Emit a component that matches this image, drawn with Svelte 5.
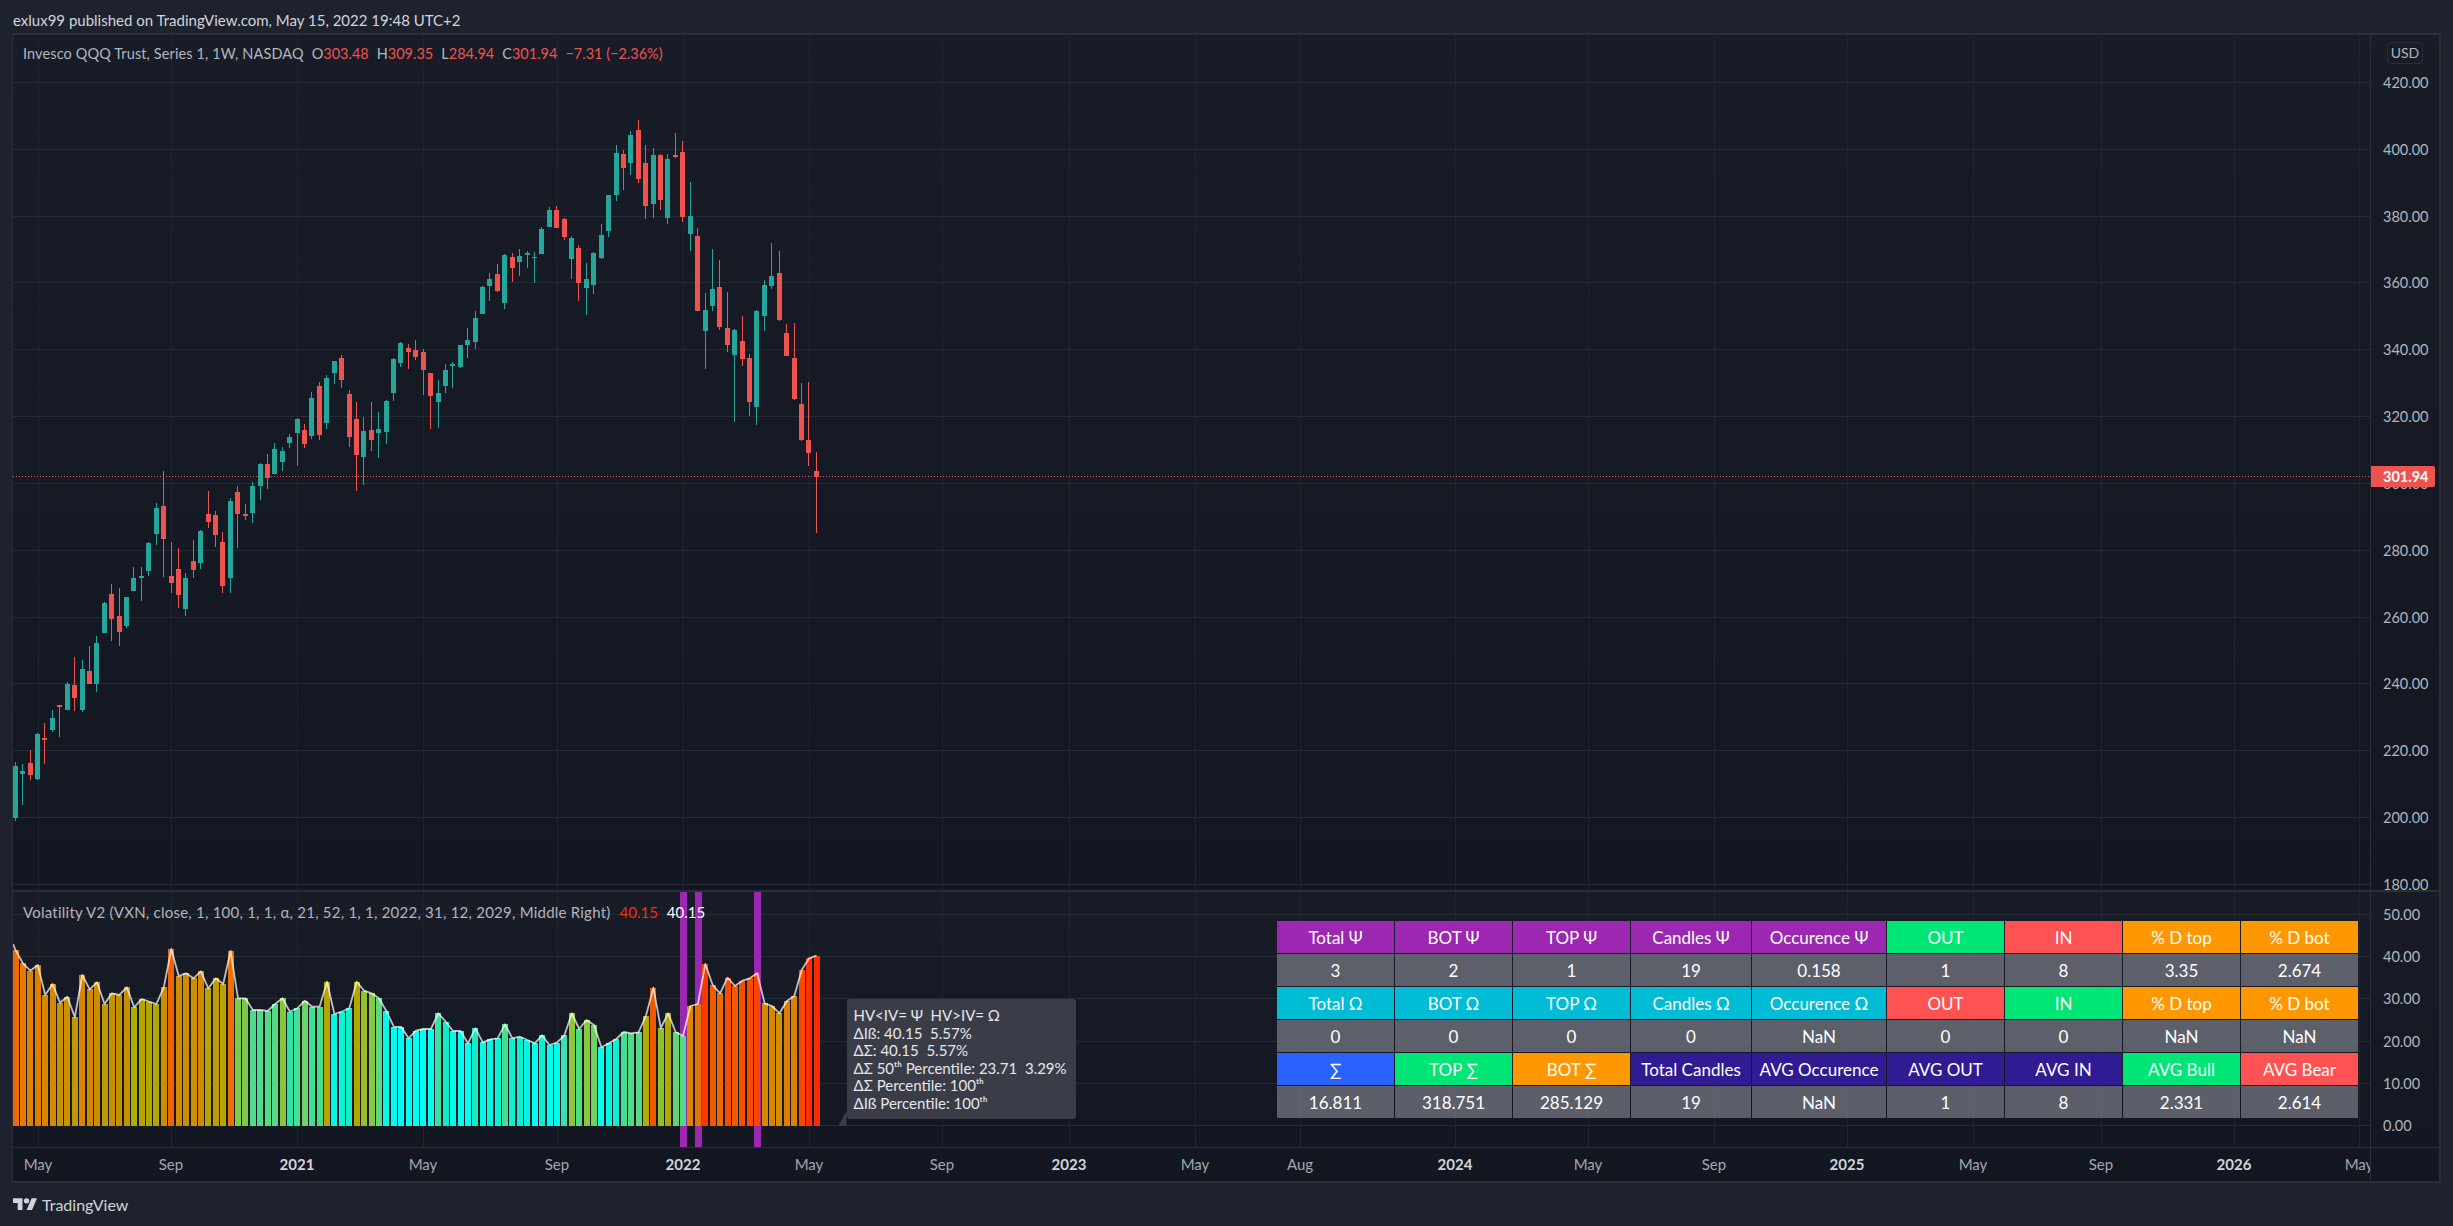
<script>
  const G = 'g', R = 'r';
  // [colour, high, bodyTop, bodyBottom, low] read from reference crops, scaled 3x with a y origin
  const z7 = [[G,966,978,1134,1143],[G,972,993,1002,1095],[R,930,969,1005,1020],[G,879,882,1017,1020],[R,849,894,900,972],[G,810,834,870,876],[R,795,795,801,891],[G,726,732,810,810],[R,651,735,774,813],[G,660,687,810,816],[R,618,693,732,732],[G,588,609,732,756],[G,486,489,579,579],[R,432,462,537,603],[R,444,528,576,618],[G,471,471,558,564],[G,381,414,453,453],[G,381,408,414,483],[G,306,309,393,408],[G,189,204,282,315],[R,93,198,297,411],[R,306,408,429,459],[R,324,387,465,504],[G,399,414,507,528],[R,300,363,390,414],[G,270,273,369,387],[R,153,222,246,264],[R,213,225,285,321],[R,276,306,438,459],[G,174,183,414,459],[R,138,156,222,324],[R,192,222,228,240],[G,126,138,219,249],[G,69,72,138,180],[R,42,72,114,147],[G,9,27,102,102]];
  const z8 = [[G,651,663,696,723],[G,612,621,639,654],[G,564,567,609,708],[R,582,600,642,654],[G,486,504,618,627],[R,456,468,615,630],[G,435,444,579,597],[G,393,393,429,462],[R,375,384,450,474],[R,480,492,621,651],[R,516,567,675,783],[G,561,603,681,765],[R,516,600,630,663],[G,546,597,609,684],[G,510,513,606,642],[G,384,387,489,513],[G,336,339,399,411],[R,342,354,366,417],[R,330,360,381,390],[R,357,366,420,495],[R,429,429,498,597],[G,450,489,516,594],[G,402,420,468,489],[G,396,402,408,474],[G,345,345,411,414],[G,294,330,345,384],[G,243,264,336,357],[G,168,171,252,252],[G,129,147,168,213],[R,102,132,183,186],[G,72,75,219,237],[R,69,81,114,156],[G,57,78,96,138],[G,63,69,75,114]];
  const z9 = [[G,426,441,444,519],[G,351,357,432,432],[G,291,300,351,351],[R,288,300,354,354],[R,324,327,381,390],[G,378,384,447,507],[R,405,414,519,573],[G,459,507,534,615],[G,426,429,525,552],[G,342,375,444,447],[G,255,255,363,381],[G,105,129,255,273],[R,120,132,174,240],[G,63,75,159,195],[R,30,60,207,219],[R,105,159,288,327],[G,114,135,282,324],[R,132,135,270,300],[G,132,147,324,342],[R,69,135,141,144],[R,93,126,321,336],[G,216,318,372,423],[R,354,378,603,603],[G,549,600,663,777],[G,417,537,588,603],[R,450,531,651,660],[R,546,654,705,726],[G,657,660,735,936],[R,618,693,747,768],[R,732,744,876,918],[G,600,603,891,945],[G,510,525,618,663],[G,399,498,528,537],[R,423,489,630,633],[R,642,669,738,738],[R,639,744,867,870],[R,819,882,990,993],[R,816,990,1029,1068],[R,1026,1083,1101,1269]];

  const conv = (list, y0) => list.map(([c, h, t, b, l]) => ({
    c, h: y0 + h / 3, t: y0 + t / 3, b: y0 + b / 3, l: y0 + l / 3
  }));
  const px = (i) => Math.floor(15.3 + 7.417 * i);
  const candles = [...conv(z7, 440), ...conv(z8, 230), ...conv(z9, 110)].map((k, i) => ({ ...k, x: px(i) }));

  const vol = [[60,'#ef6a02'],[100,'#e67a02'],[122,'#dc8200'],[105,'#e07e00'],[195,'#d88600'],[162,'#d68800'],[218,'#c89200'],[200,'#cc9000'],[262,'#c49600'],[135,'#dc8400'],[178,'#d28a00'],[157,'#d08c00'],[222,'#bc9a00'],[190,'#c89000'],[195,'#c49200'],[172,'#c69000'],[232,'#aab000'],[207,'#b8a400'],[215,'#b0a800'],[222,'#b0a800'],[172,'#c89000'],[57,'#f06400'],[138,'#d28a00'],[130,'#d08c00'],[145,'#cc9000'],[124,'#d48800'],[175,'#b8a400'],[145,'#c09c00'],[162,'#b8a400'],[63,'#ee7000'],[205,'#7ecb4a'],[205,'#80c84a'],[240,'#4ddc8c'],[240,'#4edb8a'],[243,'#52da84'],[222,'#58d886'],[205,'#86c83c'],[245,'#2ce6a2'],[235,'#40e09a'],[212,'#6cd26a'],[230,'#44de90'],[230,'#4adc8a'],[155,'#b8a400'],[252,'#00f8e0'],[245,'#0af4d8'],[235,'#14eec6'],[155,'#b0a800'],[182,'#98c024'],[190,'#88c83c'],[205,'#5cd880'],[243,'#00fae8'],[290,'#00fcf0'],[291,'#00fcf0'],[325,'#00fff4'],[302,'#00fff0'],
    [297,'#00fff0'],[297,'#00fff0'],[250,'#3ae0a4'],[275,'#10ecc8'],[303,'#00fbe8'],[303,'#00ffee'],[340,'#00fff0'],[295,'#14ecc4'],[337,'#00fbe8'],[328,'#00f8e0'],[325,'#06f4d8'],[283,'#48dc90'],[325,'#0cf0d0'],[320,'#0cf0d0'],[330,'#04f6e0'],[340,'#00fff0'],[316,'#0cf0d0'],[345,'#00fff0'],[338,'#00fbe8'],[316,'#38e2aa'],[250,'#8cc834'],[297,'#4ede88'],[270,'#88ca3c'],[285,'#70d260'],[352,'#00fdf0'],[340,'#00f8e0'],[327,'#0cf0d0'],[306,'#48dc92'],[310,'#50da88'],[307,'#5ad880'],[258,'#b0ac00'],[173,'#f05800'],[294,'#90c02c'],[250,'#b0a800'],[306,'#64d472'],[318,'#50da88'],[228,'#e48000'],[222,'#e67400'],[102,'#fa3800'],[165,'#f25a00'],[190,'#ee6a00'],[143,'#f54e00'],[168,'#f25a00'],[152,'#f55000'],[145,'#f84c00'],[130,'#fa4400'],[220,'#d68800'],[228,'#d88400'],[250,'#cc9000'],[213,'#e07c00'],[198,'#dc8000'],[120,'#fa4800'],[85,'#ff3000'],[77,'#ff2a00']];
  const base = 1125.7;
  const bars = vol.map(([z, col], i) => {
    const cx = 15.5 + 7.417 * i;
    return { x: Math.round(cx - 3), y: 930 + z / 3, col, cx };
  });
  const linePts = '13,944 ' + bars.map((b) => `${b.cx.toFixed(1)},${b.y.toFixed(1)}`).join(' ');

  const vx = [38, 171, 297, 423, 557, 683, 809, 942, 1069, 1195, 1300, 1455, 1588, 1714, 1847, 1973, 2101, 2234, 2359];
  const vnames = ['May','Sep','2021','May','Sep','2022','May','Sep','2023','May','Aug','2024','May','Sep','2025','May','Sep','2026','May'];
  const mainTicks = [[82,'420.00'],[149,'400.00'],[216,'380.00'],[282,'360.00'],[349,'340.00'],[416,'320.00'],[483,'300.00'],[550,'280.00'],[617,'260.00'],[683,'240.00'],[750,'220.00'],[817,'200.00'],[884,'180.00']];
  const volTicks = [[914,'50.00'],[956,'40.00'],[998,'30.00'],[1041,'20.00'],[1083,'10.00'],[1125,'0.00']];
  const purple = [680, 695, 754];

  const P='purple',S='gray',C='cyan',B='blue',N='green',E='red',O='orange',I='indigo';
  const row = (c, items) => items.map((t) => [t, c]);
  const table = [
    [['Total Ψ',P],['BOT Ψ',P],['TOP Ψ',P],['Candles Ψ',P],['Occurence Ψ',P],['OUT',N],['IN',E],['% D top',O],['% D bot',O]],
    row(S,['3','2','1','19','0.158','1','8','3.35','2.674']),
    [['Total Ω',C],['BOT Ω',C],['TOP Ω',C],['Candles Ω',C],['Occurence Ω',C],['OUT',E],['IN',N],['% D top',O],['% D bot',O]],
    row(S,['0','0','0','0','NaN','0','0','NaN','NaN']),
    [['∑',B],['TOP ∑',N],['BOT ∑',O],['Total Candles',I],['AVG Occurence',I],['AVG OUT',I],['AVG IN',I],['AVG Bull',N],['AVG Bear',E]],
    row(S,['16.811','318.751','285.129','19','NaN','1','8','2.331','2.614'])
  ].flat();
</script>

<div class="page">
  <header class="top">exlux99 published on TradingView.com, May 15, 2022 19:48 UTC+2</header>

  <div class="frame">
    <section class="row main">
      <div class="plot">
        <svg width="2357" height="855" viewBox="13 35 2357 855">
          {#each vx as x}<rect class="gv" x={x} y="35" width="1" height="855" />{/each}
          {#each mainTicks as [y]}<rect class="gh" x="13" y={y} width="2357" height="1" />{/each}
          <line class="last" x1="13" x2="2370" y1="476.5" y2="476.5" shape-rendering="crispEdges" />
          {#each candles as k}
            <rect class={k.c} x={k.x} y={k.h} width="1" height={k.l - k.h} shape-rendering="crispEdges" />
            <rect class={k.c} x={k.x - 2} y={k.t} width="5" height={Math.max(k.b - k.t, 1)} shape-rendering="crispEdges" />
          {/each}
        </svg>
        <div class="legend mainleg">
          <span class="name">Invesco QQQ Trust, Series 1, 1W, NASDAQ</span>
          <span class="ohlc"><i>O</i><b>303.48</b></span>
          <span class="ohlc"><i>H</i><b>309.35</b></span>
          <span class="ohlc"><i>L</i><b>284.94</b></span>
          <span class="ohlc"><i>C</i><b>301.94</b></span>
          <span class="ohlc"><b>−7.31 (−2.36%)</b></span>
        </div>
      </div>
      <div class="axis">
        <svg width="68" height="855" viewBox="2371 35 68 855">
          {#each mainTicks as [y, t]}<text class="tick" x="2383" y={y + 5.5}>{t}</text>{/each}
          <path class="tag" d="M2371 466h62a2 2 0 0 1 2 2v17a2 2 0 0 1-2 2h-62z" />
          <text class="tagt" x="2383" y="482">301.94</text>
        </svg>
        <div class="usd">USD</div>
      </div>
    </section>

    <section class="row vol">
      <div class="plot">
        <svg width="2357" height="255" viewBox="13 892 2357 255">
          {#each vx as x}<rect class="gv" x={x} y="892" width="1" height="255" />{/each}
          {#each volTicks as [y]}<rect class="gh" x="13" y={y} width="2357" height="1" />{/each}
          {#each purple as x}<rect class="pp" x={x} y="892" width="7" height="255" />{/each}
          {#each bars as b}
            <rect x={b.x} y={b.y} width="6" height={base - b.y} fill={b.col} shape-rendering="crispEdges" />
          {/each}
          <polyline class="vline" points={linePts} />
        </svg>
        <div class="legend volleg">
          <span class="vname">Volatility V2 (VXN, close, 1, 100, 1, 1, α, 21, 52, 1, 1, 2022, 31, 12, 2029, Middle Right)</span>
          <span class="v1">40.15</span>
          <span class="v2">40.15</span>
        </div>
        <div class="tip">
          <div>HV&lt;IV= Ψ&nbsp; HV&gt;IV= Ω</div>
          <div>ΔIß: 40.15&nbsp; 5.57%</div>
          <div>ΔΣ: 40.15&nbsp; 5.57%</div>
          <div>ΔΣ 50ᵗʰ Percentile: 23.71&nbsp; 3.29%</div>
          <div>ΔΣ Percentile: 100ᵗʰ</div>
          <div>ΔIß Percentile: 100ᵗʰ</div>
        </div>
        <div class="table">
          {#each table as [t, c]}<div class="cell {c}-c">{t}</div>{/each}
        </div>
      </div>
      <div class="axis">
        <svg width="68" height="255" viewBox="2371 892 68 255">
          {#each volTicks as [y, t]}<text class="tick" x="2383" y={y + 5.5}>{t}</text>{/each}
        </svg>
      </div>
    </section>

    <section class="row time">
      <div class="plot">
        <svg width="2357" height="33" viewBox="13 1148 2357 33">
          {#each vx as x, i}
            <text class={/^\d/.test(vnames[i]) ? 'year' : 'mon'} x={x} y="1170" text-anchor="middle">{vnames[i]}</text>
          {/each}
        </svg>
      </div>
      <div class="axis"></div>
    </section>
  </div>

  <footer class="foot">
    <svg class="logo" width="24" height="12.5" viewBox="0 4 35.5 18"><path d="M14 22H7V11H0V4h14v18zM28 22h-8l7.5-18h8L28 22z" /><circle cx="20" cy="8" r="4" /></svg>
    <span>TradingView</span>
  </footer>
</div>

<style>
  :global(body) { margin: 0; background: #1e222d; }
  .page {
    width: 2453px; height: 1226px; background: #1e222d; overflow: hidden;
    font-family: "Lato", "Noto Sans", sans-serif; color: #b2b5be; font-size: 15px;
    display: flex; flex-direction: column;
  }
  svg { display: block; }
  .top { height: 33px; line-height: 40px; padding-left: 13px; color: #d1d4dc; font-size: 15px; box-sizing: border-box; }
  .frame {
    margin-left: 12px; width: 2429px; box-sizing: border-box; height: 1150px;
    border: solid #2a2e39; border-width: 2px 2px 2px 1px;
    display: flex; flex-direction: column; background: #131722;
  }
  .row { display: flex; }
  .main { height: 855px; border-bottom: 2px solid #2a2e39; background: linear-gradient(#181c27, #131722); }
  .vol { height: 255px; border-bottom: 1px solid #2a2e39; background: linear-gradient(#181c27, #131722); }
  .time { height: 33px; background: #131722; }
  .plot { position: relative; width: 2357px; overflow: hidden; }
  .axis { position: relative; flex: 1; border-left: 1px solid #2a2e39; }
  .gv { fill: #20242f; }
  .gh { fill: #262a34; }
  .g { fill: #26a69a; }
  .r { fill: #ef5350; }
  .last { stroke: #ef5350; stroke-width: 1; stroke-dasharray: 1 2; }
  .pp { fill: #9c27b0; }
  .vline { fill: none; stroke: rgba(255, 255, 255, 0.72); stroke-width: 1.8; stroke-linejoin: round; }
  .tick { fill: #b2b5be; font-size: 14.5px; }
  .tag { fill: #ef5350; }
  .tagt { fill: #fff; font-size: 14.5px; font-weight: 700; }
  .usd {
    position: absolute; left: 16px; top: 7px; width: 36px; height: 22px; box-sizing: border-box;
    border: 1px solid #2a2e39; border-radius: 4px; text-align: center; line-height: 20px; font-size: 14px;
  }
  .legend { position: absolute; display: flex; white-space: nowrap; font-size: 14.5px; line-height: 20px; }
  .mainleg { left: 10px; top: 9px; gap: 8px; }
  .name { letter-spacing: 0.11px; }
  .ohlc i { font-style: normal; }
  .ohlc b { font-weight: 400; color: #ef5350; }
  .volleg { left: 10px; top: 10px; gap: 9px; font-size: 15px; }
  .vname { letter-spacing: 0.23px; }
  .v1 { color: #ff2a00; }
  .v2 { color: #fff; }
  .tip {
    position: absolute; left: 833.5px; top: 107px; width: 229px; height: 120px; box-sizing: border-box;
    padding: 8px 0 0 7px; background: #3a3d48; border-radius: 3px; color: #e6e7ea;
    font-size: 15px; line-height: 17.5px; white-space: nowrap;
  }
  .tip::before {
    content: ""; position: absolute; left: -8px; bottom: -7px; width: 8px; height: 15px;
    background: #3a3d48; clip-path: polygon(100% 0, 100% 100%, 0 100%);
  }
  .table {
    position: absolute; left: 1264px; top: 29px;
    display: grid; gap: 1px;
    grid-template-columns: 117px 117px 117px 120px 134px 117px 117px 117px 117px;
    grid-auto-rows: 32px;
  }
  .cell { color: #fff; display: flex; align-items: center; justify-content: center; font-size: 17px; white-space: nowrap; }
  .purple-c { background: #9c27b0; }
  .gray-c { background: rgba(120, 123, 134, 0.72); }
  .cyan-c { background: #00bcd4; }
  .blue-c { background: #2962ff; }
  .green-c { background: #00e676; }
  .red-c { background: #ff5252; }
  .orange-c { background: #ff9800; }
  .indigo-c { background: #311b92; }
  .mon { fill: #a3a6af; font-size: 15px; }
  .year { fill: #d1d4dc; font-size: 15px; font-weight: 700; }
  .foot { flex: 1; display: flex; align-items: center; gap: 5px; padding-left: 13px; color: #d1d4dc; font-size: 16px; padding-bottom: 1px; }
  .logo { fill: #d1d4dc; }
</style>
